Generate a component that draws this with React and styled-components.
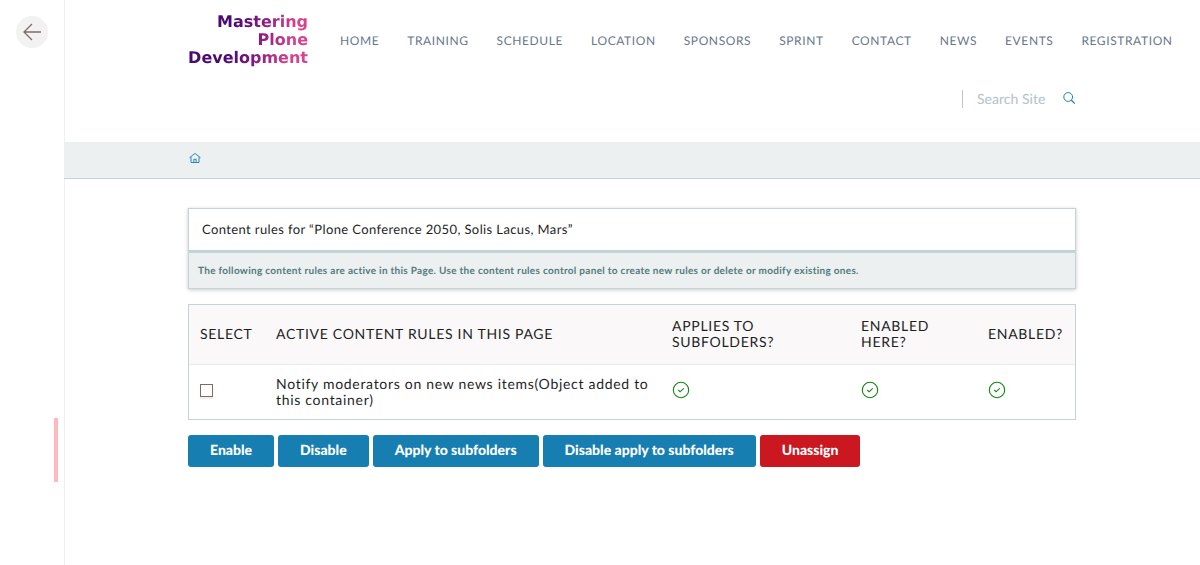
import React from 'react';
import styled, { createGlobalStyle } from 'styled-components';

const GlobalStyle = createGlobalStyle`
  *, *::before, *::after { box-sizing: border-box; }
  body {
    margin: 0;
    background: #fff;
    color: #1f1f1f;
    font-family: Lato, sans-serif;
    font-size: 14px;
    line-height: 16px;
    text-rendering: geometricPrecision;
  }
  button, input { text-rendering: inherit; }
`;

const Layout = styled.div`
  display: flex;
  min-height: 100vh;
  overflow-x: hidden;
`;

const Toolbar = styled.aside`
  display: flex;
  flex: none;
  flex-direction: column;
  justify-content: space-between;
  width: 64px;
  padding: 16px 6px 83px 16px;
  box-shadow: 1px 0 #edf1f2;
`;

const BackLink = styled.a`
  display: flex;
  align-items: center;
  justify-content: center;
  width: 32px;
  height: 32px;
  border-radius: 50%;
  background: #f3f2f2;
`;

const Handle = styled.button`
  align-self: flex-end;
  width: 4px;
  height: 64px;
  padding: 0;
  border: 0;
  background: #ffb8bf;
`;

const Page = styled.div`
  flex: 1;
  min-width: 0;
`;

const Container = styled.div`
  width: 100%;
  max-width: 888px;
  margin: 0 auto;
`;

const Header = styled.header`
  height: 142px;
  padding-top: 13px;
`;

const HeaderRow = styled.div`
  display: flex;
  align-items: center;
  gap: 32px;
`;

const Logo = styled.a`
  flex: none;
  width: 120px;
  background: linear-gradient(100deg, #4b0a73 35%, #6b0f80 50%, #d8418e 85%);
  background-clip: text;
  color: transparent;
  font: bold 16px/18px "DejaVu Sans", sans-serif;
  text-align: right;
  text-decoration: none;
`;

const Nav = styled.nav`
  display: flex;
  gap: 28px;
  padding-top: 2px;
`;

const NavLink = styled.a`
  color: #68778d;
  font-size: 12px;
  letter-spacing: 0.05em;
  text-decoration: none;
  text-transform: uppercase;
  white-space: nowrap;
`;

const Search = styled.form`
  display: flex;
  align-items: center;
  justify-content: flex-end;
  margin-top: 23px;
`;

const SearchInput = styled.input`
  width: 100px;
  height: 18px;
  padding: 0 0 0 14px;
  border: 0;
  border-left: 1px solid #b8c6c8;
  background: none;
  font: 500 14px/18px Lato, sans-serif;
  &::placeholder { color: #b8c6c8; opacity: 1; }
`;

const SearchButton = styled.button`
  display: flex;
  padding: 0 0 2px;
  border: 0;
  background: none;
`;

const Breadcrumbs = styled.nav`
  position: relative;
  height: 37px;
  padding-top: 10px;
  border-bottom: 1px solid #c4d4d6;
  background: #ecf0f1;
`;

const HomeLink = styled.a`
  display: flex;
  width: 14px;
`;

const Main = styled.main`
  padding-top: 29px;
`;

const Panel = styled.section`
  border: 1px solid #c4d4d6;
  box-shadow: 0 1px 4px rgba(0, 0, 0, 0.22);
`;

const Title = styled.h1`
  margin: 0;
  padding: 12px 13px 13px;
  border-bottom: 3px solid #c4d4d6;
  font-size: 13px;
  font-weight: 400;
  letter-spacing: 0.03em;
`;

const Description = styled.p`
  margin: 0;
  padding: 10px 9px 9px;
  background: #ecf0f1;
  color: #557b7b;
  font-size: 10px;
  font-weight: 700;
  letter-spacing: 0.03em;
`;

const Table = styled.table`
  width: 100%;
  margin-top: 15px;
  border: 1px solid #c4d4d6;
  border-spacing: 0;
  table-layout: fixed;
`;

const Column = styled.col`
  width: ${({ $width }) => $width};
`;

const HeadCell = styled.th`
  height: 60px;
  padding: 0 0 2px 11px;
  border-bottom: 1px solid #e7e9ea;
  background: #faf8f9;
  font-weight: 400;
  letter-spacing: 0.05em;
  text-align: left;
  text-transform: uppercase;
`;

const Cell = styled.td`
  height: 54px;
  padding: 0 11px;
  letter-spacing: 0.05em;
  vertical-align: middle;
`;

const ControlCell = styled(Cell)`
  padding-bottom: 4px;
`;

const Checkbox = styled.input`
  display: block;
  width: 13px;
  height: 13px;
  margin: 0;
  border: 1px solid #826a6a;
  background: #fff;
  box-shadow: 0 2px 1px #f0eeee;
  appearance: none;
  &:checked { background: #826a6a; }
`;

const Actions = styled.div`
  display: flex;
  flex-wrap: wrap;
  gap: 4px;
  margin-top: 15px;
`;

const Button = styled.button`
  height: 32px;
  padding: 0 22px 2px;
  border: 0;
  border-radius: 3px;
  background: ${({ $danger }) => ($danger ? '#cb171f' : '#177eb1')};
  color: #fff;
  font: 900 14px/16px Lato, sans-serif;
`;

const Icon = styled.svg`
  display: block;
  fill: none;
  stroke: currentColor;
  color: ${({ $color }) => $color};
`;

const CheckIcon = ({ label }) => (
  <Icon $color="#128512" width="18" height="18" viewBox="0 0 18 18" role="img" aria-label={label}>
    <circle cx="9" cy="9" r="7.7" strokeWidth="1.1" />
    <path d="M6.3 9l1.8 1.8 3.6-3.5" strokeWidth="1.1" />
  </Icon>
);

const links = ['Home', 'Training', 'Schedule', 'Location', 'Sponsors', 'Sprint', 'Contact', 'News', 'Events', 'Registration'];
const actions = ['Enable', 'Disable', 'Apply to subfolders', 'Disable apply to subfolders', 'Unassign'];
const columns = [
  ['Select', '76px'],
  ['Active content rules in this Page', 'auto'],
  ['Applies to subfolders?', '189px'],
  ['Enabled here?', '127px'],
  ['Enabled?', '98px'],
];

export default function App() {
  return (
    <Layout>
      <GlobalStyle />
      <Toolbar>
        <BackLink href="#back" aria-label="Back">
          <Icon $color="#826a6a" width="18" height="18" viewBox="0 0 18 18" strokeWidth="1.3">
            <path d="M18 9H1M9 1L1 9l8 8" />
          </Icon>
        </BackLink>
        <Handle type="button" aria-label="Shrink toolbar" />
      </Toolbar>
      <Page>
        <Header>
          <Container>
            <HeaderRow>
              <Logo href="#home">Mastering Plone Development</Logo>
              <Nav aria-label="Main">
                {links.map((name) => (
                  <NavLink key={name} href={`#${name.toLowerCase()}`}>{name}</NavLink>
                ))}
              </Nav>
            </HeaderRow>
            <Search role="search">
              <SearchInput type="text" placeholder="Search Site" aria-label="Search Site" />
              <SearchButton type="button" aria-label="Search">
                <Icon $color="#1a83bc" width="14" height="14" viewBox="0 0 14 14">
                  <circle cx="6.2" cy="6" r="4.4" />
                  <path d="M9.4 9.2l3.4 3.4" strokeWidth="1.3" />
                </Icon>
              </SearchButton>
            </Search>
          </Container>
        </Header>
        <Breadcrumbs aria-label="Breadcrumbs">
          <Container>
            <HomeLink href="#home" aria-label="Home">
              <Icon $color="#177eb1" width="14" height="14" viewBox="0 0 14 14" strokeWidth="0.9">
                <path d="M1.5 5.7L7 1.4l5.5 4.3M3 5v5.5h8V5M5.8 10.5V7.3h2.4v3.2" />
              </Icon>
            </HomeLink>
          </Container>
        </Breadcrumbs>
        <Main>
          <Container>
            <Panel>
              <Title>Content rules for “Plone Conference 2050, Solis Lacus, Mars”</Title>
              <Description>
                The following content rules are active in this Page. Use the content rules control panel to create new rules or delete or modify existing ones.
              </Description>
            </Panel>
            <Table>
              <colgroup>
                {columns.map(([name, width]) => <Column key={name} $width={width} />)}
              </colgroup>
              <thead>
                <tr>
                  {columns.map(([name]) => <HeadCell key={name} scope="col">{name}</HeadCell>)}
                </tr>
              </thead>
              <tbody>
                <tr>
                  <ControlCell><Checkbox type="checkbox" aria-label="Notify moderators on new news items" /></ControlCell>
                  <Cell>Notify moderators on new news items(Object added to this container)</Cell>
                  <ControlCell><CheckIcon label="Applies to subfolders" /></ControlCell>
                  <ControlCell><CheckIcon label="Enabled here" /></ControlCell>
                  <ControlCell><CheckIcon label="Enabled" /></ControlCell>
                </tr>
              </tbody>
            </Table>
            <Actions>
              {actions.map((name) => (
                <Button key={name} type="button" $danger={name === 'Unassign'}>{name}</Button>
              ))}
            </Actions>
          </Container>
        </Main>
      </Page>
    </Layout>
  );
}
